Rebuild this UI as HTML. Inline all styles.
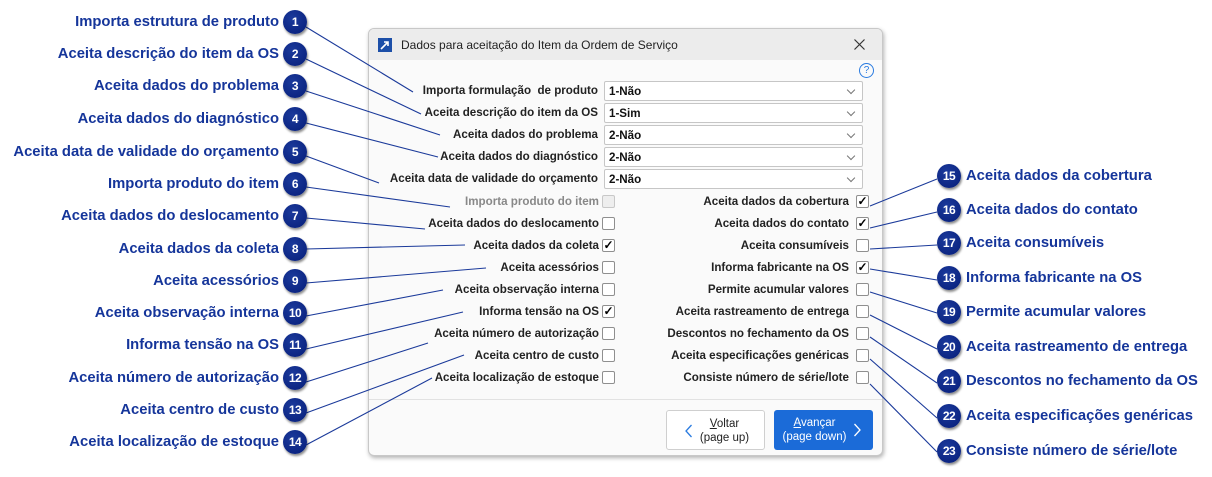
<!DOCTYPE html>
<html><head><meta charset="utf-8">
<style>
*{margin:0;padding:0;box-sizing:border-box}
body{width:1212px;height:477px;background:#fff;position:relative;overflow:hidden;font-family:"Liberation Sans",sans-serif}
.cl{position:absolute;font-size:14.8px;font-weight:bold;color:#15359a;white-space:nowrap;line-height:18px}
.l{right:933px;text-align:right}
.r{left:966px}
.b{position:absolute;width:24px;height:24px;border-radius:50%;background:radial-gradient(circle at 40% 35%,#1b3a9c,#061d78);color:#fff;font-size:12px;font-weight:bold;text-align:center;line-height:24px;box-shadow:1px 2px 2px rgba(0,0,0,.45);letter-spacing:-.5px}
.dlg{position:absolute;left:368px;top:28px;width:515px;height:428px;background:#fafafa;border:1px solid #c8c8c8;border-radius:6px;box-shadow:1px 2px 4px rgba(0,0,0,.3);overflow:hidden}
.tb{height:31px;background:#ececec;position:relative}
.tb .t{position:absolute;left:32px;top:9px;font-size:12px;color:#222}
.fl{position:absolute;font-size:11.6px;font-weight:bold;color:#222;white-space:nowrap;text-align:right;line-height:14px}
.sel{position:absolute;left:235px;width:259px;height:20px;background:#fff;border:1px solid #c6c6c6;border-radius:2px;font-size:11.6px;font-weight:bold;color:#111;padding:3px 0 0 4px}
.sel:after{content:"";position:absolute;right:8px;top:5px;width:5px;height:5px;border-right:1px solid #777;border-bottom:1px solid #777;transform:rotate(45deg)}
.cb{position:absolute;width:13px;height:13px;border:1px solid #8f8f8f;border-radius:2px;background:#fff;font-size:12px;line-height:11px;text-align:center;color:#000;font-weight:bold}
.btn{position:absolute;top:381px;height:40px;border-radius:3px;font-size:11.5px;text-align:center;line-height:14px;padding-top:6px}
</style></head><body>

<div class="dlg">
 <div class="tb">
  <div style="position:absolute;left:9px;top:9px;width:14px;height:14px;background:#1c4fa8"><svg width="14" height="14"><path d="M3 11 L10 4 M6 4 H10 V8" stroke="#fff" stroke-width="1.6" fill="none"/></svg></div>
  <div class="t">Dados para aceitação do Item da Ordem de Serviço</div>
  <svg style="position:absolute;left:485px;top:10px" width="11" height="11"><path d="M0.5 0.5 L10.5 10.5 M10.5 0.5 L0.5 10.5" stroke="#333" stroke-width="1.2"/></svg>
 </div>
 <div style="position:absolute;left:490px;top:34px;width:15px;height:15px;border:1.3px solid #2a7be0;border-radius:50%;color:#2a7be0;font-size:10px;text-align:center;line-height:13px">?</div>

 <div class="fl" style="right:284px;top:55px">Importa formulação&nbsp; de produto</div><div class="sel" style="top:52px">1-Não</div>
 <div class="fl" style="right:284px;top:77px">Aceita descrição do item da OS</div><div class="sel" style="top:74px">1-Sim</div>
 <div class="fl" style="right:284px;top:99px">Aceita dados do problema</div><div class="sel" style="top:96px">2-Não</div>
 <div class="fl" style="right:284px;top:121px">Aceita dados do diagnóstico</div><div class="sel" style="top:118px">2-Não</div>
 <div class="fl" style="right:284px;top:143px">Aceita data de validade do orçamento</div><div class="sel" style="top:140px">2-Não</div>

 <div class="fl" style="right:283px;top:166px;color:#888">Importa produto do item</div><div class="cb" style="left:233px;top:166px;background:#eee;border-color:#c8c8c8"></div>
 <div class="fl" style="right:283px;top:188px">Aceita dados do deslocamento</div><div class="cb" style="left:233px;top:188px"></div>
 <div class="fl" style="right:283px;top:210px">Aceita dados da coleta</div><div class="cb" style="left:233px;top:210px">✓</div>
 <div class="fl" style="right:283px;top:232px">Aceita acessórios</div><div class="cb" style="left:233px;top:232px"></div>
 <div class="fl" style="right:283px;top:254px">Aceita observação interna</div><div class="cb" style="left:233px;top:254px"></div>
 <div class="fl" style="right:283px;top:276px">Informa tensão na OS</div><div class="cb" style="left:233px;top:276px">✓</div>
 <div class="fl" style="right:283px;top:298px">Aceita número de autorização</div><div class="cb" style="left:233px;top:298px"></div>
 <div class="fl" style="right:283px;top:320px">Aceita centro de custo</div><div class="cb" style="left:233px;top:320px"></div>
 <div class="fl" style="right:283px;top:342px">Aceita localização de estoque</div><div class="cb" style="left:233px;top:342px"></div>

 <div class="fl" style="right:33px;top:166px">Aceita dados da cobertura</div><div class="cb" style="left:487px;top:166px">✓</div>
 <div class="fl" style="right:33px;top:188px">Aceita dados do contato</div><div class="cb" style="left:487px;top:188px">✓</div>
 <div class="fl" style="right:33px;top:210px">Aceita consumíveis</div><div class="cb" style="left:487px;top:210px"></div>
 <div class="fl" style="right:33px;top:232px">Informa fabricante na OS</div><div class="cb" style="left:487px;top:232px">✓</div>
 <div class="fl" style="right:33px;top:254px">Permite acumular valores</div><div class="cb" style="left:487px;top:254px"></div>
 <div class="fl" style="right:33px;top:276px">Aceita rastreamento de entrega</div><div class="cb" style="left:487px;top:276px"></div>
 <div class="fl" style="right:33px;top:298px">Descontos no fechamento da OS</div><div class="cb" style="left:487px;top:298px"></div>
 <div class="fl" style="right:33px;top:320px">Aceita especificações genéricas</div><div class="cb" style="left:487px;top:320px"></div>
 <div class="fl" style="right:33px;top:342px">Consiste número de série/lote</div><div class="cb" style="left:487px;top:342px"></div>

 <div style="position:absolute;left:0;right:0;top:370px;border-top:1px solid #e2e2e2"></div>
 <div class="btn" style="left:297px;width:99px;background:#fff;border:1px solid #cfcfcf;color:#222;padding-left:18px"><svg style="position:absolute;left:18px;top:13px" width="8" height="14"><path d="M6.5 1 L1 7 L6.5 13" stroke="#2a7be0" stroke-width="1.3" fill="none"/></svg><u>V</u>oltar<br>(page up)</div>
 <div class="btn" style="left:405px;width:99px;background:#1b6bd8;color:#fff;padding-right:18px"><svg style="position:absolute;right:12px;top:13px" width="8" height="14"><path d="M1.5 1 L7 7 L1.5 13" stroke="#fff" stroke-width="1.3" fill="none"/></svg><u>A</u>vançar<br>(page down)</div>
</div>

<svg style="position:absolute;left:0;top:0" width="1212" height="477">
<g stroke="#1b3a9a" stroke-width="1.1" fill="none">
<path d="M306 27 L413 92"/><path d="M306 59 L421 114"/><path d="M306 91 L440 135"/><path d="M306 123 L438 157"/>
<path d="M306 156 L379 183"/><path d="M306 187 L450 207"/><path d="M306 218 L425 229"/><path d="M306 249 L465 245"/>
<path d="M306 283 L486 268"/><path d="M306 316 L443 290"/><path d="M306 349 L463 312"/><path d="M306 382 L428 343"/>
<path d="M306 413 L464 355"/><path d="M306 445 L432 378"/>
<path d="M870 206 L937 179"/><path d="M870 228 L937 212"/><path d="M870 249 L937 245"/><path d="M870 269 L937 280"/>
<path d="M870 292 L937 313"/><path d="M870 315 L937 349"/><path d="M870 337 L937 383"/><path d="M870 359 L937 418"/><path d="M870 384 L937 452"/>
</g></svg>

<div class="cl l" style="top:13px">Importa estrutura de produto</div><div class="b" style="left:283px;top:10px">1</div>
<div class="cl l" style="top:45px">Aceita descrição do item da OS</div><div class="b" style="left:283px;top:42px">2</div>
<div class="cl l" style="top:77px">Aceita dados do problema</div><div class="b" style="left:283px;top:74px">3</div>
<div class="cl l" style="top:110px">Aceita dados do diagnóstico</div><div class="b" style="left:283px;top:107px">4</div>
<div class="cl l" style="top:143px">Aceita data de validade do orçamento</div><div class="b" style="left:283px;top:140px">5</div>
<div class="cl l" style="top:175px">Importa produto do item</div><div class="b" style="left:283px;top:172px">6</div>
<div class="cl l" style="top:207px">Aceita dados do deslocamento</div><div class="b" style="left:283px;top:204px">7</div>
<div class="cl l" style="top:240px">Aceita dados da coleta</div><div class="b" style="left:283px;top:237px">8</div>
<div class="cl l" style="top:272px">Aceita acessórios</div><div class="b" style="left:283px;top:269px">9</div>
<div class="cl l" style="top:304px">Aceita observação interna</div><div class="b" style="left:283px;top:301px">10</div>
<div class="cl l" style="top:336px">Informa tensão na OS</div><div class="b" style="left:283px;top:333px">11</div>
<div class="cl l" style="top:369px">Aceita número de autorização</div><div class="b" style="left:283px;top:366px">12</div>
<div class="cl l" style="top:401px">Aceita centro de custo</div><div class="b" style="left:283px;top:398px">13</div>
<div class="cl l" style="top:433px">Aceita localização de estoque</div><div class="b" style="left:283px;top:430px">14</div>

<div class="b" style="left:937px;top:164px">15</div><div class="cl r" style="top:167px">Aceita dados da cobertura</div>
<div class="b" style="left:937px;top:198px">16</div><div class="cl r" style="top:201px">Aceita dados do contato</div>
<div class="b" style="left:937px;top:231px">17</div><div class="cl r" style="top:234px">Aceita consumíveis</div>
<div class="b" style="left:937px;top:266px">18</div><div class="cl r" style="top:269px">Informa fabricante na OS</div>
<div class="b" style="left:937px;top:300px">19</div><div class="cl r" style="top:303px">Permite acumular valores</div>
<div class="b" style="left:937px;top:335px">20</div><div class="cl r" style="top:338px">Aceita rastreamento de entrega</div>
<div class="b" style="left:937px;top:369px">21</div><div class="cl r" style="top:372px">Descontos no fechamento da OS</div>
<div class="b" style="left:937px;top:404px">22</div><div class="cl r" style="top:407px">Aceita especificações genéricas</div>
<div class="b" style="left:937px;top:439px">23</div><div class="cl r" style="top:442px">Consiste número de série/lote</div>
</body></html>
